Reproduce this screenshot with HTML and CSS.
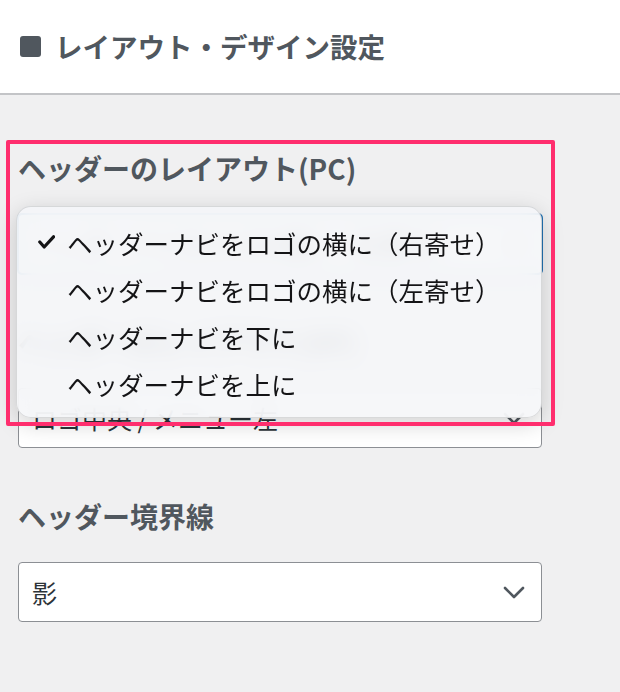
FILE: index.html
```html
<!DOCTYPE html>
<html lang="ja">
<head>
<meta charset="utf-8">
<title>レイアウト・デザイン設定</title>
<link rel="stylesheet" href="styles.css">
</head>
<body>
<header class="top">
  <h2 class="title"><span class="sq"></span>レイアウト・デザイン設定</h2>
</header>
<main class="panel">
  <div class="field">
    <div class="label">ヘッダーのレイアウト(PC)</div>
    <div class="select focus">
      <span class="value">ヘッダーナビをロゴの横に（右寄せ）</span>
      <svg class="chev" width="22" height="13" viewBox="0 0 22 13"><polyline points="2,2 11,11 20,2" fill="none" stroke="currentColor" stroke-width="2.6" stroke-linecap="round" stroke-linejoin="round"/></svg>
    </div>
    <ul class="menu">
      <li class="item on"><svg class="check" width="17" height="14" viewBox="0 0 17 14"><polyline points="1.8,7 6.2,12 15.5,1.8" fill="none" stroke="currentColor" stroke-width="3.2" stroke-linecap="round" stroke-linejoin="round"/></svg><span>ヘッダーナビをロゴの横に（右寄せ）</span></li>
      <li class="item"><span>ヘッダーナビをロゴの横に（左寄せ）</span></li>
      <li class="item"><span>ヘッダーナビを下に</span></li>
      <li class="item"><span>ヘッダーナビを上に</span></li>
    </ul>
  </div>
  <div class="field">
    <div class="label">ヘッダーのレイアウト(SP)</div>
    <div class="select">
      <span class="value">ロゴ中央 / メニュー左</span>
      <svg class="chev" width="22" height="13" viewBox="0 0 22 13"><polyline points="2,2 11,11 20,2" fill="none" stroke="currentColor" stroke-width="2.6" stroke-linecap="round" stroke-linejoin="round"/></svg>
    </div>
  </div>
  <div class="field">
    <div class="label">ヘッダー境界線</div>
    <div class="select">
      <span class="value">影</span>
      <svg class="chev" width="22" height="13" viewBox="0 0 22 13"><polyline points="2,2 11,11 20,2" fill="none" stroke="currentColor" stroke-width="2.6" stroke-linecap="round" stroke-linejoin="round"/></svg>
    </div>
  </div>
  <div class="mark"></div>
</main>
</body>
</html>
```

FILE: styles.css
```css
html, body {
  margin: 0;
  padding: 0;
}
body {
  width: 620px;
  height: 692px;
  overflow: hidden;
  background: #f0f0f1;
  font-family: "Noto Sans CJK JP", "Noto Sans", sans-serif;
  color: #50575e;
}
.top {
  height: 93px;
  background: #ffffff;
  border-bottom: 2px solid #c3c4c7;
  display: flex;
  align-items: center;
}
.title {
  margin: 0;
  padding-left: 20px;
  display: flex;
  align-items: center;
  font-size: 27.5px;
  font-weight: 700;
  line-height: 1;
  color: #50575e;
}
.sq {
  width: 21px;
  height: 21px;
  border-radius: 3px;
  background: #50575e;
  margin-right: 14px;
}
.panel {
  position: relative;
  padding: 56px 0 0 18px;
}
.field {
  position: relative;
  width: 524px;
  margin-bottom: 51px;
}
.label {
  font-size: 28px;
  font-weight: 700;
  line-height: 34px;
  margin-bottom: 29px;
  color: #50575e;
}
.select {
  box-sizing: border-box;
  height: 60px;
  background: #ffffff;
  border: 1px solid #8c8f94;
  border-radius: 4px;
  display: flex;
  align-items: center;
  justify-content: space-between;
  padding: 0 16px 0 13px;
}
.select.focus {
  border-color: #2271b1;
  box-shadow: 0 0 0 1px #2271b1;
}
.value {
  font-size: 25px;
  color: #2c3338;
  white-space: nowrap;
}
.chev {
  color: #50575e;
  flex: none;
}
.menu {
  position: absolute;
  z-index: 10;
  top: 55px;
  left: -2px;
  width: 526px;
  height: 212px;
  box-sizing: border-box;
  margin: 0;
  padding: 12px 0 12px 0;
  list-style: none;
  background: rgba(245, 246, 248, 0.9);
  -webkit-backdrop-filter: blur(10px);
  backdrop-filter: blur(10px);
  border: 1px solid rgba(0, 0, 0, 0.12);
  border-radius: 15px;
  box-shadow: 0 6px 22px rgba(0, 0, 0, 0.18);
}
.item {
  height: 47px;
  display: flex;
  align-items: center;
  padding-left: 50px;
  position: relative;
  font-size: 25.5px;
  color: #141416;
  white-space: nowrap;
}
.check {
  position: absolute;
  left: 21px;
  top: 16px;
  color: #141416;
}
.mark {
  position: absolute;
  z-index: 20;
  left: 6px;
  top: 45px;
  width: 549px;
  height: 286px;
  box-sizing: border-box;
  border: 4.5px solid #ff2e6e;
  border-radius: 2px;
  pointer-events: none;
}
```
